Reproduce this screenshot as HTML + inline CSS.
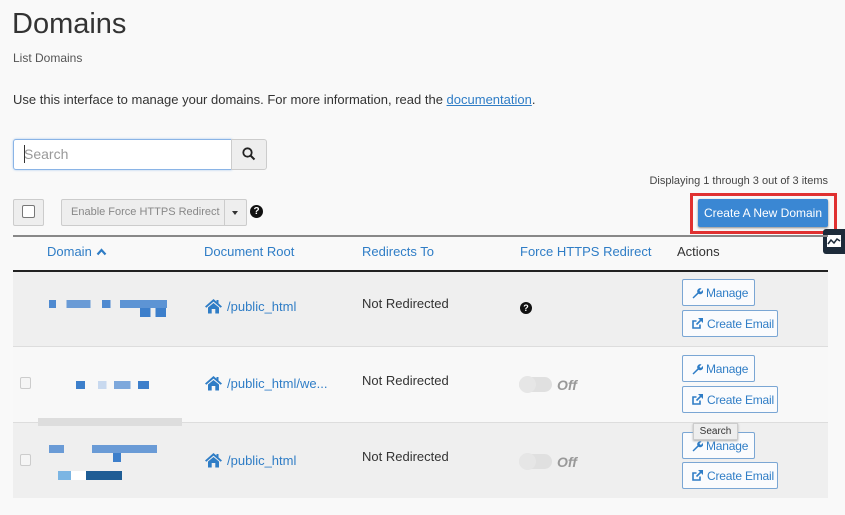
<!DOCTYPE html>
<html><head><meta charset="utf-8"><style>
*{box-sizing:border-box;margin:0;padding:0}
body{width:845px;height:515px;background:#f9f9f9;font-family:"Liberation Sans",sans-serif;color:#333;position:relative;overflow:hidden}
.a{position:absolute}
.blue{color:#2f7dc6}
.btn{position:absolute;border:1px solid #7aa6d4;background:#fafbfd;color:#2f7dc6;font-size:12px;border-radius:2px;display:flex;align-items:center;padding-left:8px;height:27px;white-space:nowrap;letter-spacing:-0.2px}
.btn svg{margin-right:3px;flex:none}
.px{position:absolute}
.tog{position:absolute;width:33px;height:15px;border-radius:8px;background:#e0e0e0}
.tog::before{content:"";position:absolute;left:0;top:-1px;width:17px;height:17px;border-radius:50%;background:#e6e6e6}
.off{position:absolute;font-style:italic;font-weight:bold;color:#999;font-size:14px}
.cb{position:absolute;width:11px;height:12px;border:1px solid #ccc;border-radius:2px;background:#f5f5f5}
.root{position:absolute;color:#2f7dc6;font-size:13px;display:flex;align-items:center}
.root svg{margin-right:4px}
</style></head><body>
<div class="a" style="left:12px;top:8px;font-size:29px;color:#333">Domains</div>
<div class="a" style="left:13px;top:51px;font-size:12px;color:#555">List Domains</div>
<div class="a" style="left:13px;top:92px;font-size:13px;color:#333">Use this interface to manage your domains. For more information, read the <span class="blue" style="text-decoration:underline">documentation</span>.</div>
<div class="a" style="left:13px;top:139px;width:219px;height:31px;border:1px solid #8ab4e6;border-radius:3px 0 0 3px;background:#fff;box-shadow:0 0 2px #a9c9ef"></div>
<div class="a" style="left:24px;top:146px;font-size:14px;color:#999">Search</div>
<div class="a" style="left:24px;top:145px;width:1px;height:18px;background:#333"></div>
<div class="a" style="left:231px;top:139px;width:36px;height:31px;border:1px solid #ccc;background:#eee;border-radius:0 3px 3px 0"></div>
<svg class="a" style="left:242px;top:147px" width="14" height="14" viewBox="0 0 14 14"><circle cx="5.5" cy="5.5" r="4.2" fill="none" stroke="#222" stroke-width="1.8"/><line x1="8.5" y1="8.5" x2="12.5" y2="12.5" stroke="#222" stroke-width="2"/></svg>
<div class="a" style="right:17px;top:175px;font-size:11px;color:#444">Displaying 1 through 3 out of 3 items</div>
<div class="a" style="left:13px;top:199px;width:31px;height:27px;border:1px solid #ccc;background:#eee;border-radius:2px"></div>
<div class="a" style="left:22px;top:205px;width:13px;height:13px;border:1px solid #777;border-radius:2px;background:#fff"></div>
<div class="a" style="left:61px;top:199px;width:186px;height:27px;border:1px solid #ccc;background:#eee;border-radius:2px"></div>
<div class="a" style="left:224px;top:199px;width:1px;height:27px;background:#ccc"></div>
<div class="a" style="left:71px;top:206px;font-size:11px;color:#888">Enable Force HTTPS Redirect</div>
<div class="a" style="left:232px;top:211px;border:3.5px solid transparent;border-top:4px solid #333"></div>
<div class="a" style="left:250px;top:205px;width:13px;height:13px;border-radius:50%;background:#111;color:#fff;font-size:10px;font-weight:bold;text-align:center;line-height:13px">?</div>
<div class="a" style="left:690px;top:193px;width:147px;height:41px;border:3px solid #e03131"></div>
<div class="a" style="left:698px;top:199px;width:130px;height:28px;background:#3a87d3;border-radius:2px;color:#fff;font-size:12px;text-align:center;line-height:28px;box-shadow:0 1px 2px #888">Create A New Domain</div>
<div class="a" style="left:823px;top:229px;width:22px;height:25px;background:#1d2b3a;border-radius:3px 0 0 3px"></div>
<div class="a" style="left:827px;top:235px;width:14px;height:12px;background:#fff"></div>
<svg class="a" style="left:827px;top:235px" width="14" height="12"><polyline points="1,9 4,5 7,8 10,4 13,6" fill="none" stroke="#1d2b3a" stroke-width="1.5"/></svg>
<div class="a" style="left:13px;top:235px;width:815px;height:2px;background:#888"></div>
<div class="a" style="left:13px;top:270px;width:815px;height:76px;background:#efefef;border-top:2px solid #222"></div>
<div class="a" style="left:13px;top:346px;width:815px;height:76px;background:#f8f8f8;border-top:1px solid #ddd"></div>
<div class="a" style="left:13px;top:422px;width:815px;height:76px;background:#efefef;border-top:1px solid #ddd"></div>
<div class="a blue" style="left:47px;top:244px;font-size:13px">Domain</div>
<svg class="a" style="left:96px;top:248px" width="11" height="8"><polyline points="1.5,6.5 5.5,2 9.5,6.5" fill="none" stroke="#2f7dc6" stroke-width="2.2"/></svg>
<div class="a blue" style="left:204px;top:244px;font-size:13px">Document Root</div>
<div class="a blue" style="left:362px;top:244px;font-size:13px">Redirects To</div>
<div class="a blue" style="left:520px;top:244px;font-size:13px">Force HTTPS Redirect</div>
<div class="a" style="left:677px;top:244px;font-size:13px;color:#333">Actions</div>
<div class="px" style="left:49px;top:300px;width:118px;height:8px;background:linear-gradient(90deg,#4f8ad0 0 6%,transparent 6% 15%,#6a9bd6 15% 35%,transparent 35% 45%,#4f8ad0 45% 52%,transparent 52% 60%,#5d94d4 60% 100%)"></div>
<div class="px" style="left:140px;top:308px;width:26px;height:9px;background:linear-gradient(90deg,#3d7fcb 0 40%,transparent 40% 60%,#3d7fcb 60%)"></div>
<div class="px" style="left:76px;top:381px;width:73px;height:8px;background:linear-gradient(90deg,#3d7fcb 0 12%,transparent 12% 30%,#c8d9ef 30% 42%,transparent 42% 52%,#7da8dc 52% 75%,transparent 75% 85%,#3d7fcb 85%)"></div>
<div class="a" style="left:38px;top:418px;width:144px;height:8px;background:#ddd"></div>
<div class="px" style="left:49px;top:445px;width:108px;height:8px;background:linear-gradient(90deg,#6a9bd6 0 14%,transparent 14% 40%,#6a9bd6 40%)"></div>
<div class="px" style="left:113px;top:453px;width:8px;height:9px;background:#3d7fcb"></div>
<div class="px" style="left:58px;top:471px;width:64px;height:9px;background:linear-gradient(90deg,#7bb5e3 0 20%,#fff 20% 44%,#1f5d95 44%)"></div>
<div class="root" style="left:204px;top:298px"><svg width="19" height="16" viewBox="0 0 19 16"><path d="M9.5 1 L1 8.5 L2.3 9.8 L9.5 3.6 L16.7 9.8 L18 8.5 L14.5 5.4 V2 H12.5 V3.6 Z" fill="#2f7dc6"/><path d="M4 9.5 L9.5 5 L15 9.5 V15.5 H11.3 V11 H7.7 V15.5 H4 Z" fill="#2f7dc6"/></svg>/public_html</div>
<div class="root" style="left:204px;top:375px"><svg width="19" height="16" viewBox="0 0 19 16"><path d="M9.5 1 L1 8.5 L2.3 9.8 L9.5 3.6 L16.7 9.8 L18 8.5 L14.5 5.4 V2 H12.5 V3.6 Z" fill="#2f7dc6"/><path d="M4 9.5 L9.5 5 L15 9.5 V15.5 H11.3 V11 H7.7 V15.5 H4 Z" fill="#2f7dc6"/></svg>/public_html/we...</div>
<div class="root" style="left:204px;top:452px"><svg width="19" height="16" viewBox="0 0 19 16"><path d="M9.5 1 L1 8.5 L2.3 9.8 L9.5 3.6 L16.7 9.8 L18 8.5 L14.5 5.4 V2 H12.5 V3.6 Z" fill="#2f7dc6"/><path d="M4 9.5 L9.5 5 L15 9.5 V15.5 H11.3 V11 H7.7 V15.5 H4 Z" fill="#2f7dc6"/></svg>/public_html</div>
<div class="a" style="left:362px;top:296px;font-size:13px">Not Redirected</div>
<div class="a" style="left:362px;top:373px;font-size:13px">Not Redirected</div>
<div class="a" style="left:362px;top:449px;font-size:13px">Not Redirected</div>
<div class="a" style="left:520px;top:302px;width:12px;height:12px;border-radius:50%;background:#111;color:#fff;font-size:9px;font-weight:bold;text-align:center;line-height:12px">?</div>
<div class="tog" style="left:519px;top:377px"></div><div class="off" style="left:557px;top:377px">Off</div>
<div class="tog" style="left:519px;top:454px"></div><div class="off" style="left:557px;top:454px">Off</div>
<div class="cb" style="left:20px;top:377px"></div>
<div class="cb" style="left:20px;top:454px"></div>
<div class="btn" style="left:682px;top:279px;width:73px"><svg width="12" height="12" viewBox="0 0 12 12"><path d="M1.5 10.5 L6.5 5.5 A3 3 0 0 1 10.5 1.5 L8.5 3.5 L9 4.5 L10 4.9 L11.9 3 A3 3 0 0 1 7.5 6.7 L2.5 11.5 Z" fill="#2f7dc6"/></svg>Manage</div>
<div class="btn" style="left:682px;top:310px;width:96px"><svg width="13" height="13" viewBox="0 0 13 13"><path d="M9 7.5 V11 H2 V4 H5.5" fill="none" stroke="#2f7dc6" stroke-width="1.6"/><path d="M7 1 H12 V6 Z" fill="#2f7dc6"/><line x1="5.5" y1="7.5" x2="11" y2="2" stroke="#2f7dc6" stroke-width="1.6"/></svg>Create Email</div>
<div class="btn" style="left:682px;top:355px;width:73px"><svg width="12" height="12" viewBox="0 0 12 12"><path d="M1.5 10.5 L6.5 5.5 A3 3 0 0 1 10.5 1.5 L8.5 3.5 L9 4.5 L10 4.9 L11.9 3 A3 3 0 0 1 7.5 6.7 L2.5 11.5 Z" fill="#2f7dc6"/></svg>Manage</div>
<div class="btn" style="left:682px;top:386px;width:96px"><svg width="13" height="13" viewBox="0 0 13 13"><path d="M9 7.5 V11 H2 V4 H5.5" fill="none" stroke="#2f7dc6" stroke-width="1.6"/><path d="M7 1 H12 V6 Z" fill="#2f7dc6"/><line x1="5.5" y1="7.5" x2="11" y2="2" stroke="#2f7dc6" stroke-width="1.6"/></svg>Create Email</div>
<div class="btn" style="left:682px;top:432px;width:73px"><svg width="12" height="12" viewBox="0 0 12 12"><path d="M1.5 10.5 L6.5 5.5 A3 3 0 0 1 10.5 1.5 L8.5 3.5 L9 4.5 L10 4.9 L11.9 3 A3 3 0 0 1 7.5 6.7 L2.5 11.5 Z" fill="#2f7dc6"/></svg>Manage</div>
<div class="btn" style="left:682px;top:462px;width:96px"><svg width="13" height="13" viewBox="0 0 13 13"><path d="M9 7.5 V11 H2 V4 H5.5" fill="none" stroke="#2f7dc6" stroke-width="1.6"/><path d="M7 1 H12 V6 Z" fill="#2f7dc6"/><line x1="5.5" y1="7.5" x2="11" y2="2" stroke="#2f7dc6" stroke-width="1.6"/></svg>Create Email</div>
<div class="a" style="left:693px;top:423px;width:45px;height:17px;background:#eee;border:1px solid #ccc;font-size:10px;color:#333;text-align:center;line-height:15px;box-shadow:0 1px 2px #aaa">Search</div>
</body></html>
